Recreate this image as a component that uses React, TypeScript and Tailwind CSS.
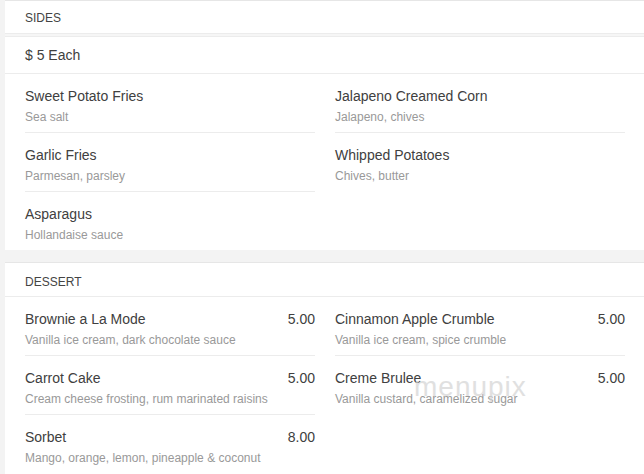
import React from "react";

type Item = { name: string; desc: string; price?: string };

const sides: Item[][] = [
  [
    { name: "Sweet Potato Fries", desc: "Sea salt" },
    { name: "Garlic Fries", desc: "Parmesan, parsley" },
    { name: "Asparagus", desc: "Hollandaise sauce" },
  ],
  [
    { name: "Jalapeno Creamed Corn", desc: "Jalapeno, chives" },
    { name: "Whipped Potatoes", desc: "Chives, butter" },
  ],
];

const dessert: Item[][] = [
  [
    { name: "Brownie a La Mode", desc: "Vanilla ice cream, dark chocolate sauce", price: "5.00" },
    { name: "Carrot Cake", desc: "Cream cheese frosting, rum marinated raisins", price: "5.00" },
    { name: "Sorbet", desc: "Mango, orange, lemon, pineapple & coconut", price: "8.00" },
  ],
  [
    { name: "Cinnamon Apple Crumble", desc: "Vanilla ice cream, spice crumble", price: "5.00" },
    { name: "Creme Brulee", desc: "Vanilla custard, caramelized sugar", price: "5.00" },
  ],
];

function Column({ items }: { items: Item[] }) {
  return (
    <div className="w-[290px] flex flex-col">
      {items.map((it, i) => (
        <div
          key={it.name}
          className={
            "pt-[12px] pb-[6px] " +
            (i < items.length - 1 ? "border-b border-[#ececec]" : "")
          }
        >
          <div className="flex justify-between text-[14px] leading-[21px] text-[#404040]">
            <span>{it.name}</span>
            {it.price && <span>{it.price}</span>}
          </div>
          <div className="pt-[1px] text-[12px] leading-[18px] text-[#999999]">{it.desc}</div>
        </div>
      ))}
    </div>
  );
}

function Grid({ cols }: { cols: Item[][] }) {
  return (
    <div className="flex gap-[20px] pl-[20px] bg-white">
      {cols.map((c, i) => (
        <Column key={i} items={c} />
      ))}
    </div>
  );
}

export default function App() {
  return (
    <div
      className="relative w-[644px] h-[474px] overflow-hidden bg-[#f3f3f3]"
      style={{ fontFamily: '"Liberation Sans", Arial, sans-serif' }}
    >
      <div className="ml-[5px] w-[660px]">
        {/* SIDES */}
        <div className="border-t border-[#e6e6e6] bg-white">
          <div className="h-[33px] flex items-center pl-[20px] pt-[1px] text-[12px] text-[#444444] border-b border-[#ececec]">
            SIDES
          </div>
          <div className="h-[2px] bg-[#f6f6f6]" />
          <div className="h-[38px] flex items-center pl-[20px] text-[14px] text-[#404040] border-t border-[#ececec] border-b">
            $ 5 Each
          </div>
          <Grid cols={sides} />
        </div>

        <div className="h-[12px]" />

        {/* DESSERT */}
        <div className="border-t border-[#e6e6e6] bg-white">
          <div className="h-[34px] flex items-center pl-[20px] pt-[4px] text-[12px] text-[#444444] border-b border-[#ececec]">
            DESSERT
          </div>
          <Grid cols={dessert} />
          <div className="h-[20px] bg-white" />
        </div>
      </div>

      <div className="absolute left-[414px] top-[366px] text-[28px] tracking-[1px] text-[#d4d4d4] opacity-70 pointer-events-none font-light">
        menupix
      </div>
    </div>
  );
}
